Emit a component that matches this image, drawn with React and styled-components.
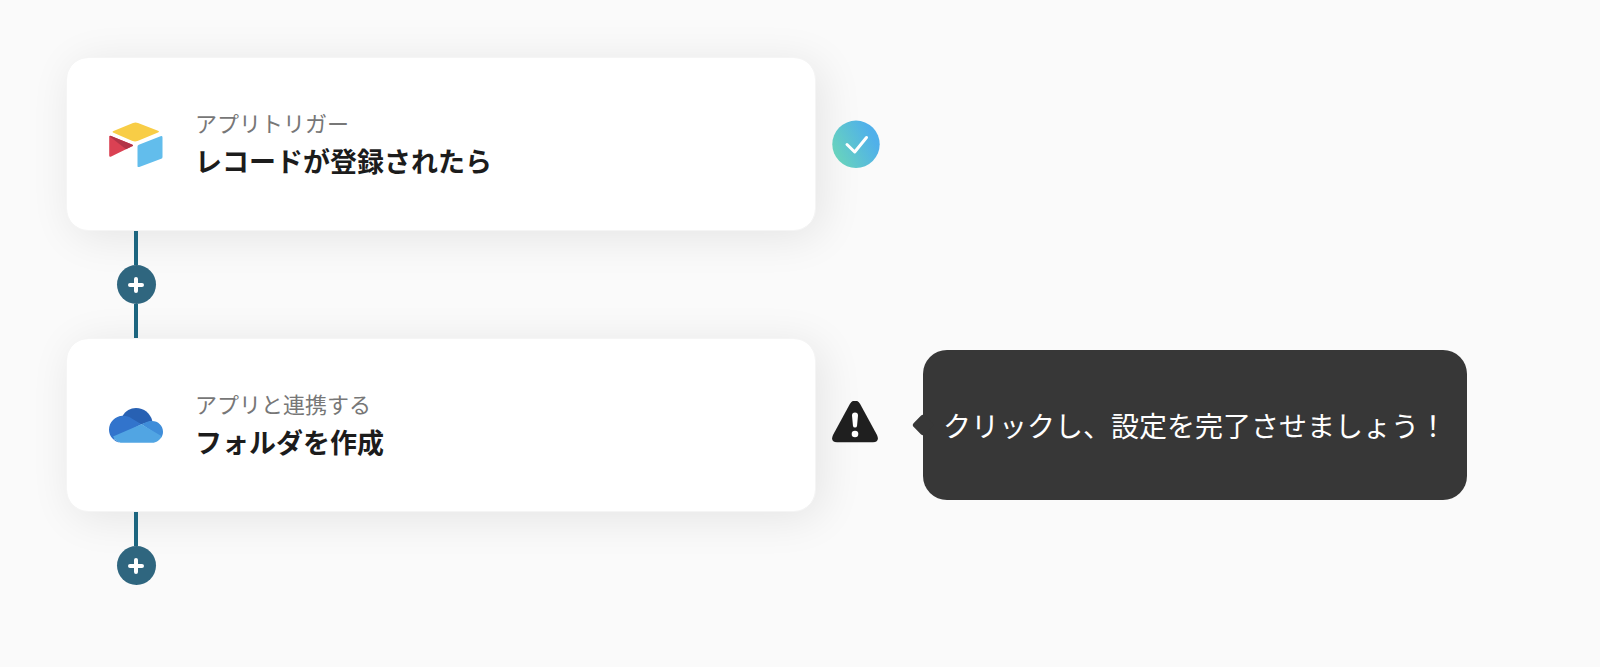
import { createGlobalStyle, styled } from "styled-components";

const App = () => {
    return <>
        <GlobalStyle />
        <Flow>
            <Step>
                <Card>
                    <AirtableLogo />
                    <Texts>
                        <Label>アプリトリガー</Label>
                        <Title>レコードが登録されたら</Title>
                    </Texts>
                </Card>
                <CheckIcon />
            </Step>
            <Connector>
                <Line />
                <AddButton />
                <Line />
            </Connector>
            <Step>
                <Card>
                    <OneDriveLogo />
                    <Texts>
                        <Label>アプリと連携する</Label>
                        <Title>フォルダを作成</Title>
                    </Texts>
                </Card>
                <WarningIcon />
                <Tooltip role="status">クリックし、設定を完了させましょう！</Tooltip>
            </Step>
            <Connector>
                <Line />
                <AddButton />
            </Connector>
        </Flow>
    </>;
}

export default App;

const AirtableLogo = () => (
    <Logo viewBox="0 0 54 54" role="img" aria-label="Airtable">
        <path d="M4.500 14 24 6Q26.500 5 29 6L49 13.800Q51 14.700 49 15.600L28.500 24.100Q26 25 23.500 24.100L4.500 15.800Q2.500 14.900 4.500 14Z" fill="#f8cd46" />
        <path d="M28.500 29.700Q28.500 28.300 29.800 27.800L51.500 19.200Q53.500 18.500 53.500 20.500V39.900Q53.500 41.300 52.200 41.800L30.300 50Q28.500 50.500 28.500 48.900Z" fill="#62bdec" />
        <path d="M.2 20Q.2 18.200 2 19L23 27.400Q25 28.300 23.100 29.300L2.200 39.500Q.2 40.300 .2 38.500Z" fill="#da4153" />
        <path d="M.5 19.200Q1 18.600 2 19L23 27.400Q25 28.300 23.100 29.300L17 32.200Z" fill="#b23447" />
    </Logo>
)

const OneDriveLogo = () => (
    <Logo viewBox="0 0 54 54" role="img" aria-label="OneDrive">
        <path d="M13.500 18C16.500 12.800 21.500 10 27 10c8 0 14.300 5.400 16.300 12.800L32 26.500Z" fill="#2861b3" />
        <path d="M10.500 44.500C4.600 43.200 0 38 0 31.700 0 24.200 6.200 18 13.800 17.800c3.500-.1 6.400 1 9 2.600L32.400 26.300 5 41Z" fill="#3274cc" />
        <path d="M32.400 26.300 37 24.200c1.800-.8 3.800-1.300 6-1.300C49.200 22.900 54 27.700 54 33.700c0 2.400-.6 4-1.700 5.800Z" fill="#3f8dd9" />
        <path d="M4 38.500 32.400 26.300 52.800 38.300C50.800 42.300 47.500 44.800 43 44.800H13C9 44.800 6 42.300 4 38.500Z" fill="#51a5e3" />
    </Logo>
)

const CheckIcon = () => (
    <Marker viewBox="0 0 48 48" role="img" aria-label="完了">
        <defs>
            <linearGradient id="done" x1="0" y1="0.75" x2="1" y2="0.25">
                <stop offset="0.05" stopColor="#68d3bd" />
                <stop offset="0.85" stopColor="#50b0ea" />
            </linearGradient>
        </defs>
        <circle cx="24" cy="24.3" r="23.7" fill="url(#done)" />
        <path d="M15 24.500 22.700 32 34.500 17.500" fill="none" stroke="#fff" strokeWidth="3" strokeLinecap="round" strokeLinejoin="round" />
    </Marker>
)

const WarningIcon = () => (
    <Marker viewBox="0 0 48 48" role="img" aria-label="未設定">
        <path d="M18 2.700Q23 -4 28 2.700L45 34Q48 41 41 41.300H5Q-2 41 1 34Z" fill="#1f1f1f" />
        <path d="M23 11.500Q26 11.500 26 14.500L25 25Q24.800 26.500 23 26.500T21 25L20 14.500Q20 11.500 23 11.500Z" fill="#fff" />
        <circle cx="23" cy="33" r="3.300" fill="#fff" />
    </Marker>
)

const AddButton = () => (
    <RoundButton type="button" aria-label="追加">
        <svg viewBox="0 0 16 16" width="16" height="16">
            <path d="M8 2v12M2 8h12" stroke="#fff" strokeWidth="4" strokeLinecap="round" />
        </svg>
    </RoundButton>
)

const GlobalStyle = createGlobalStyle`
    body {
        margin: 0;
        background: #fafafa;
        color: #1c1c1c;
        font-family: "Noto Sans CJK JP", sans-serif;
    }
`

const Flow = styled.main`
    padding: 57px 66px;
`

const Step = styled.section`
    display: flex;
    align-items: center;
`

const Card = styled.article`
    box-sizing: border-box;
    display: flex;
    align-items: center;
    gap: 32px;
    flex: 0 1 750px;
    min-height: 174px;
    padding: 24px 42px;
    background: white;
    background-clip: padding-box;
    border: 1px solid #f5f5f5;
    border-radius: 22px;
    box-shadow: 6px 6px 44px rgba(0, 0, 0, 0.09);
`

const Logo = styled.svg`
    flex: none;
    width: 54px;
    height: 54px;
`

const Texts = styled.div`
    display: flex;
    flex-direction: column;
`

const Label = styled.span`
    font-size: 22px;
    line-height: 34px;
    color: #777;
`

const Title = styled.h2`
    margin: 0;
    font-size: 27px;
    line-height: 44px;
    font-weight: 700;
`

const Marker = styled.svg`
    flex: none;
    width: 48px;
    height: 48px;
    margin-left: 16px;
`

const Tooltip = styled.div`
    position: relative;
    display: flex;
    align-items: center;
    min-height: 150px;
    margin-left: 43px;
    padding: 0 20px;
    background: #373737;
    border-radius: 24px;
    color: white;
    font-size: 28px;
    line-height: 40px;
    white-space: nowrap;

    &::before {
        content: "";
        position: absolute;
        left: -8px;
        top: calc(50% - 8px);
        width: 16px;
        height: 16px;
        background: #373737;
        border-radius: 3px;
        transform: rotate(45deg);
    }
`

const Connector = styled.div`
    position: relative;
    display: flex;
    flex-direction: column;
    align-items: center;
    width: 140px;
`

const Line = styled.span`
    width: 4px;
    height: 34px;
    background: #1c657f;
`

const RoundButton = styled.button`
    display: flex;
    align-items: center;
    justify-content: center;
    width: 39px;
    height: 39px;
    padding: 0;
    border: none;
    border-radius: 50%;
    background: #2f667f;
    cursor: pointer;
`
